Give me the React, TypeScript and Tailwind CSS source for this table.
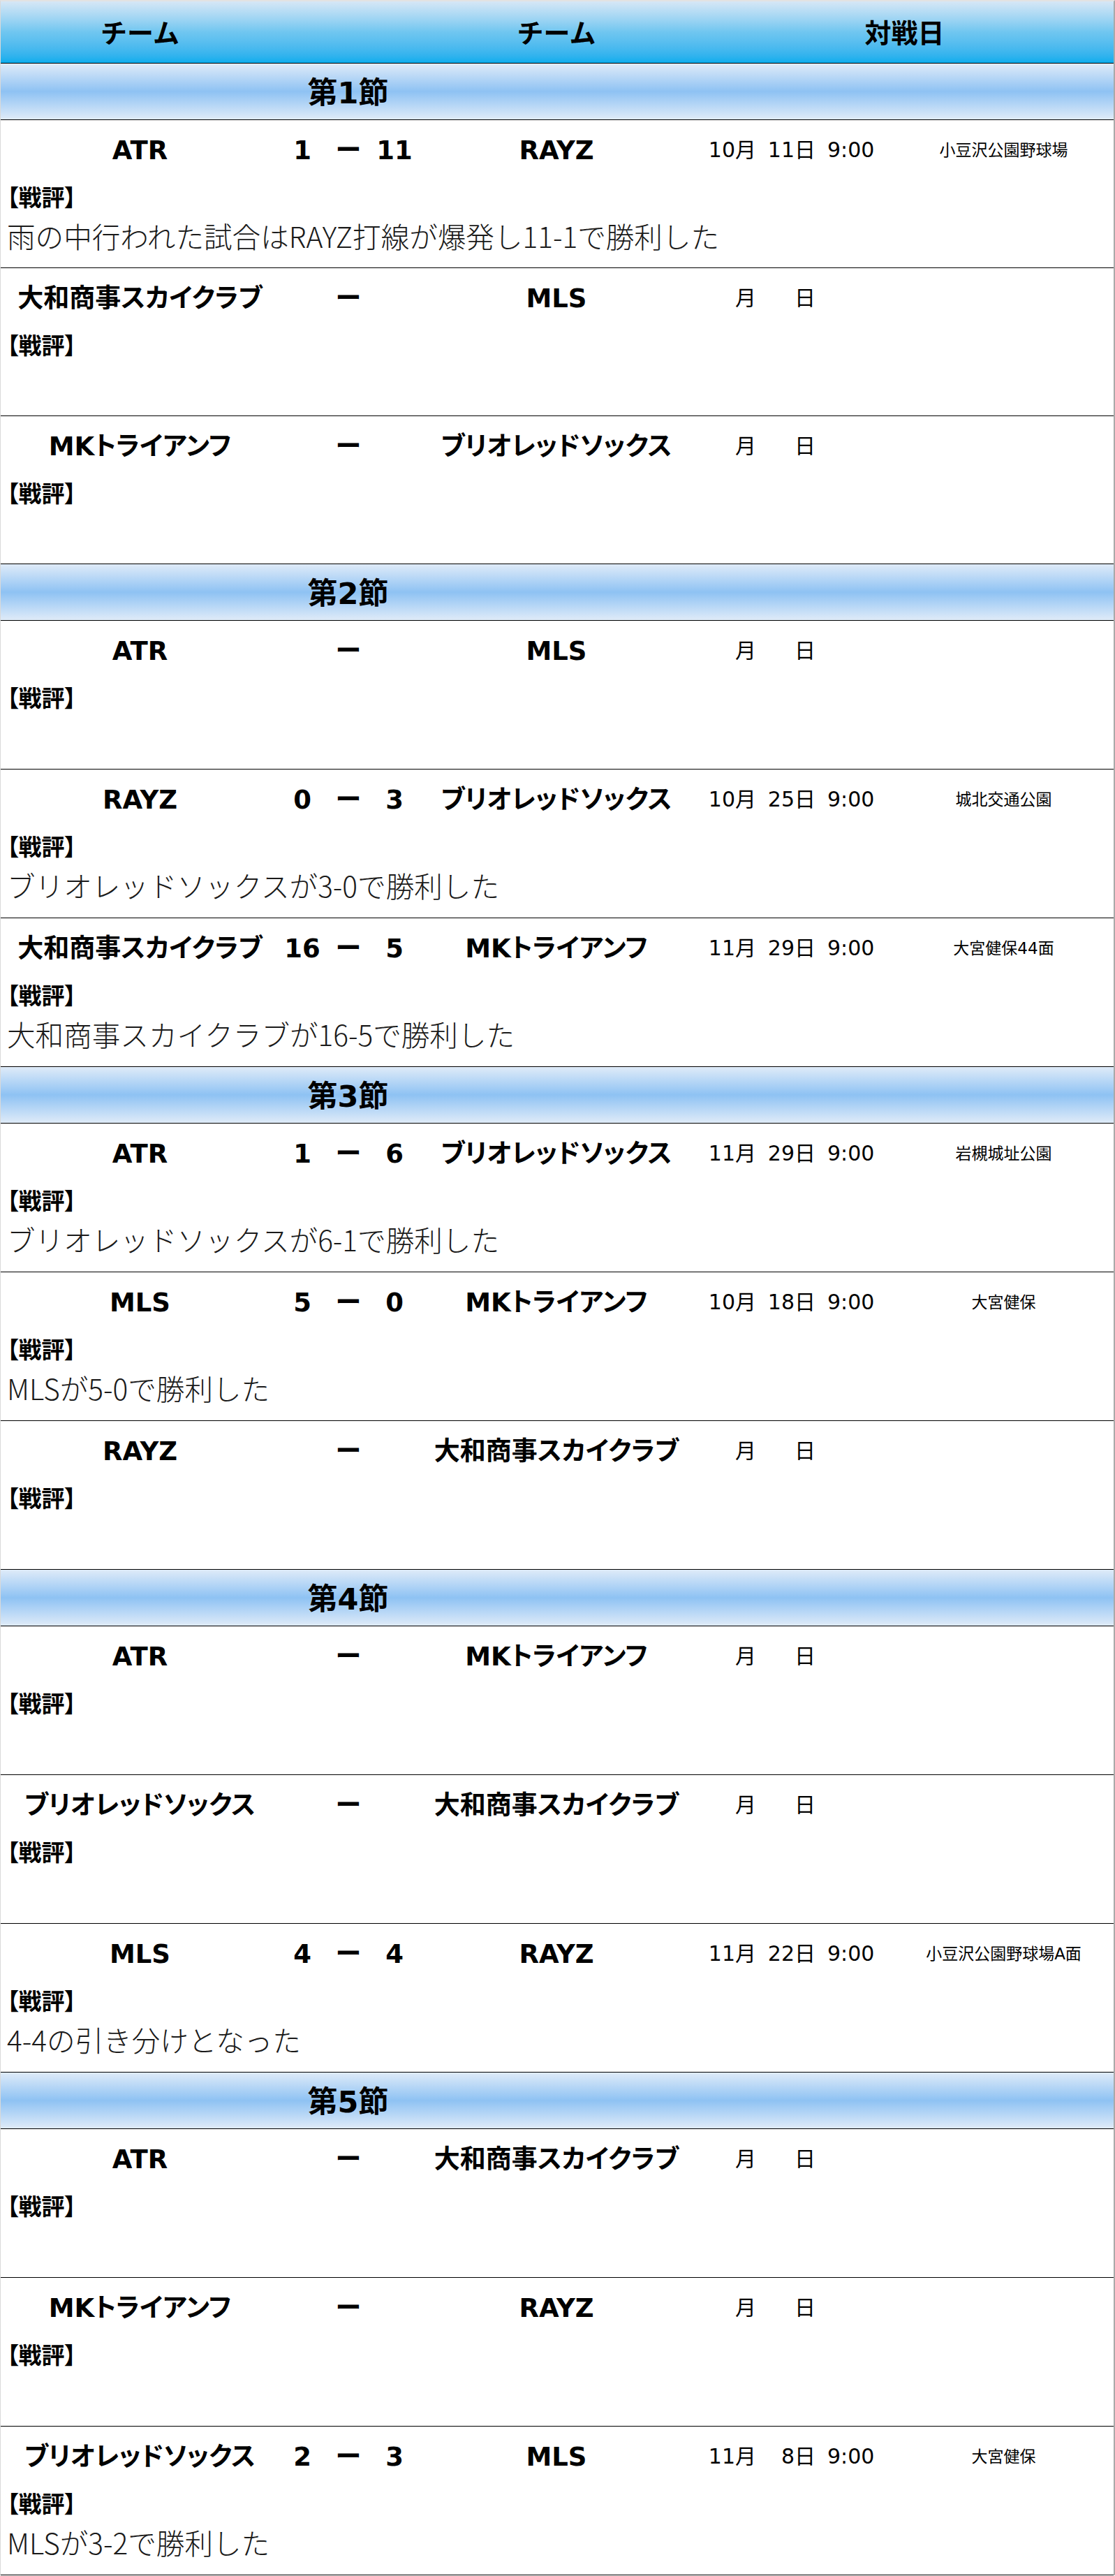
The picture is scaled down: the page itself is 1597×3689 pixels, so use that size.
import React from 'react';

type Match = {
    home: string;
    away: string;
    hs?: string;
    as?: string;
    month?: string;
    day?: string;
    time?: string;
    venue?: string;
    comment?: string;
};

type Section = {
    title: string;
    matches: Match[];
};

const sections: Section[] = [
    {
        title: '第1節',
        matches: [
            { home: 'ATR', away: 'RAYZ', hs: '1', as: '11', month: '10', day: '11', time: '9:00', venue: '小豆沢公園野球場', comment: '雨の中行われた試合はRAYZ打線が爆発し11-1で勝利した' },
            { home: '大和商事スカイクラブ', away: 'MLS' },
            { home: 'MKトライアンフ', away: 'ブリオレッドソックス' },
        ],
    },
    {
        title: '第2節',
        matches: [
            { home: 'ATR', away: 'MLS' },
            { home: 'RAYZ', away: 'ブリオレッドソックス', hs: '0', as: '3', month: '10', day: '25', time: '9:00', venue: '城北交通公園', comment: 'ブリオレッドソックスが3-0で勝利した' },
            { home: '大和商事スカイクラブ', away: 'MKトライアンフ', hs: '16', as: '5', month: '11', day: '29', time: '9:00', venue: '大宮健保44面', comment: '大和商事スカイクラブが16-5で勝利した' },
        ],
    },
    {
        title: '第3節',
        matches: [
            { home: 'ATR', away: 'ブリオレッドソックス', hs: '1', as: '6', month: '11', day: '29', time: '9:00', venue: '岩槻城址公園', comment: 'ブリオレッドソックスが6-1で勝利した' },
            { home: 'MLS', away: 'MKトライアンフ', hs: '5', as: '0', month: '10', day: '18', time: '9:00', venue: '大宮健保', comment: 'MLSが5-0で勝利した' },
            { home: 'RAYZ', away: '大和商事スカイクラブ' },
        ],
    },
    {
        title: '第4節',
        matches: [
            { home: 'ATR', away: 'MKトライアンフ' },
            { home: 'ブリオレッドソックス', away: '大和商事スカイクラブ' },
            { home: 'MLS', away: 'RAYZ', hs: '4', as: '4', month: '11', day: '22', time: '9:00', venue: '小豆沢公園野球場A面', comment: '4-4の引き分けとなった' },
        ],
    },
    {
        title: '第5節',
        matches: [
            { home: 'ATR', away: '大和商事スカイクラブ' },
            { home: 'MKトライアンフ', away: 'RAYZ' },
            { home: 'ブリオレッドソックス', away: 'MLS', hs: '2', as: '3', month: '11', day: '8', time: '9:00', venue: '大宮健保', comment: 'MLSが3-2で勝利した' },
        ],
    },
];

const MatchRow: React.FC<{ m: Match; short?: boolean }> = ({ m, short }) => (
    <div className={`${short ? 'h-[212px]' : 'h-[213px]'} border-b border-black flex flex-col`}>
        {/* teams, score, date, venue */}
        <div className="h-[86px] shrink-0 flex items-center leading-none">
            <div className="w-[399px] text-center text-[37px] font-bold [font-feature-settings:'palt']">{m.home}</div>
            <div className="w-[66px] text-center text-[37px] font-bold">{m.hs}</div>
            <div className="w-[66px] text-center text-[37px] font-bold">ー</div>
            <div className="w-[66px] text-center text-[37px] font-bold">{m.as}</div>
            <div className="w-[398px] text-center text-[37px] font-bold [font-feature-settings:'palt']">{m.away}</div>
            <div className="w-[284px] flex items-center text-[30px]">
                <span className="w-[57px] text-right">{m.month}</span>
                <span className="w-[29px] text-center">月</span>
                <span className="w-[56px] text-right">{m.day}</span>
                <span className="w-[30px] text-center">日</span>
                {m.time && <span className="ml-[17px]">{m.time}</span>}
            </div>
            <div className="flex-1 text-center text-[23px]">{m.venue}</div>
        </div>
        {/* review */}
        <div className="h-[50px] shrink-0 flex items-center pl-[9px] text-[33px] font-bold leading-none [font-feature-settings:'palt']">【戦評】</div>
        <div className="h-[60px] shrink-0 flex items-center pl-[9px] text-[40.6px] font-light leading-none text-[#1a1a1a] font-['Noto_Sans_CJK_JP',sans-serif]">
            {m.comment}
        </div>
    </div>
);

export default function App() {
    return (
        <div className="w-full bg-white text-black font-['DejaVu_Sans','Noto_Sans_CJK_JP',sans-serif] border-t-2 border-t-[#e2e2e2] border-l border-l-[#d9d9d9] border-r-2 border-r-[#a9a9a9]">
            {/* table head */}
            <div className="h-[89px] pt-[3px] flex items-center border-b border-black bg-linear-to-b from-[#d6e7f6] via-[#6fc6f0] to-[#03aded] text-[38px] font-bold leading-none">
                <div className="w-[399px] text-center">チーム</div>
                <div className="w-[198px]" />
                <div className="w-[398px] text-center">チーム</div>
                <div className="flex-1 text-center">対戦日</div>
            </div>

            {sections.map((sec, si) => (
                <div key={sec.title}>
                    <div className="h-[81px] pt-[4px] flex items-center border-b border-black bg-linear-to-b from-[#dfebf8] via-[#8ec2f3] to-[#dfebf8]">
                        <div className="w-[995px] text-center text-[43px] font-bold leading-none">{sec.title}</div>
                    </div>
                    {sec.matches.map((m, i) => (
                        <MatchRow key={i} m={m} short={si === 0} />
                    ))}
                </div>
            ))}
        </div>
    );
}
